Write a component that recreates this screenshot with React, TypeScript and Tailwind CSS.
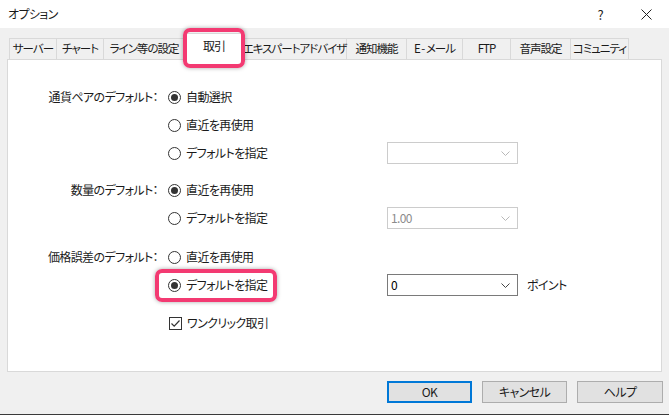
import React from "react";

const tabs = [
  { label: "サーバー", w: "w-[48px]" },
  { label: "チャート", w: "w-[47px]" },
  { label: "ライン等の設定", w: "w-[81px]" },
  { label: "取引", w: "w-[58px]", active: true },
  { label: "エキスパートアドバイザ", w: "w-[104px]" },
  { label: "通知機能", w: "w-[60px]" },
  { label: "E - メール", w: "w-[56px]" },
  { label: "FTP", w: "w-[48px]" },
  { label: "音声設定", w: "w-[60px]" },
  { label: "コミュニティ", w: "w-[58px]" },
];

function Radio({ checked }: { checked?: boolean }) {
  return (
    <span className="w-[13px] h-[13px] rounded-full border border-[#333] bg-white flex items-center justify-center shrink-0">
      {checked && <span className="w-[7px] h-[7px] rounded-full bg-[#333]" />}
    </span>
  );
}

function Checkbox({ checked }: { checked?: boolean }) {
  return (
    <span className="w-[13px] h-[13px] border border-[#333] bg-white shrink-0 flex items-center justify-center">
      {checked && (
        <svg width="11" height="11" viewBox="0 0 11 11">
          <path d="M1.5 5.5 L4.2 8.2 L9.5 2.5" fill="none" stroke="#333" strokeWidth="1.2" />
        </svg>
      )}
    </span>
  );
}

function Select({ value, disabled }: { value?: string; disabled?: boolean }) {
  return (
    <div
      className={`w-[131px] h-[22px] bg-white border flex items-center justify-between pl-[3px] pr-[7px] shrink-0 ${
        disabled ? "border-[#cccccc] text-[#8c8c8c]" : "border-[#7a7a7a] text-black"
      }`}
    >
      <span>{value}</span>
      <svg width="9" height="5" viewBox="0 0 9 5">
        <path d="M0.5 0.5 L4.5 4.5 L8.5 0.5" fill="none" stroke={disabled ? "#b8b8b8" : "#444"} strokeWidth="1" />
      </svg>
    </div>
  );
}

function Row({
  label,
  option,
  checked,
  extra,
}: {
  label?: string;
  option: string;
  checked?: boolean;
  extra?: React.ReactNode;
}) {
  return (
    <div className="h-[28px] flex items-center">
      <div className="w-[153px] pr-[3px] text-right whitespace-nowrap shrink-0">{label}</div>
      <div className="ml-[7px] w-[219px] flex items-center gap-[5px] shrink-0">
        <Radio checked={checked} />
        <span className="whitespace-nowrap">{option}</span>
      </div>
      {extra}
    </div>
  );
}

export default function App() {
  return (
    <div
      className="relative w-[669px] h-[415px] bg-[#f0f0f0] flex flex-col text-[12px] text-[#1a1a1a] leading-none tracking-[-0.6px] border-b border-[#3a3a3a] overflow-hidden [font-feature-settings:'palt'] font-['Noto_Sans_CJK_JP','Noto_Sans',sans-serif]"
    >
      {/* title bar */}
      <div className="h-[28px] bg-white flex items-center pl-[8px] shrink-0">
        <span className="flex-1">オプション</span>
        <span className="text-[13px] text-[#222] mr-[38px]">?</span>
        <svg width="11" height="11" viewBox="0 0 11 11" className="mr-[17px]">
          <path d="M0.5 0.5 L10.5 10.5 M10.5 0.5 L0.5 10.5" stroke="#222" strokeWidth="1" />
        </svg>
      </div>

      {/* tabs */}
      <div className="flex items-end pl-[9px] h-[31px] shrink-0 relative z-10 tracking-[-1px] text-[11.5px]">
        {tabs.map((t) =>
          t.active ? (
            <div
              key={t.label}
              className={`${t.w} h-[27px] -mb-[1px] shrink-0 whitespace-nowrap bg-white border border-b-0 border-[#d9d9d9] flex items-center justify-center pb-[2px] text-[12px]`}
            >
              {t.label}
            </div>
          ) : (
            <div
              key={t.label}
              className={`${t.w} h-[21px] shrink-0 whitespace-nowrap border-t border-r border-[#d9d9d9] first:border-l flex items-center justify-center`}
            >
              {t.label}
            </div>
          )
        )}
      </div>

      {/* panel */}
      <div className="mx-[7px] h-[313px] bg-white border border-[#d9d9d9] pt-[23px] shrink-0">
        <Row label="通貨ペアのデフォルト：" option="自動選択" checked />
        <Row option="直近を再使用" />
        <Row option="デフォルトを指定" extra={<Select disabled />} />

        <div className="mt-[9px]">
          <Row label="数量のデフォルト：" option="直近を再使用" checked />
          <Row option="デフォルトを指定" extra={<Select disabled value="1.00" />} />
        </div>

        <div className="mt-[11px]">
          <Row label="価格誤差のデフォルト：" option="直近を再使用" />
          <Row
            option="デフォルトを指定"
            checked
            extra={
              <div className="flex items-center">
                <Select value="0" />
                <span className="ml-[9px] whitespace-nowrap">ポイント</span>
              </div>
            }
          />
        </div>

        <div className="mt-[10px] h-[28px] flex items-center pl-[161px] gap-[5px]">
          <Checkbox checked />
          <span>ワンクリック取引</span>
        </div>
      </div>

      {/* buttons */}
      <div className="flex justify-end gap-[10px] pr-[6px] mt-[9px]">
        <button className="w-[85px] h-[22px] bg-[#e1e1e1] border-2 border-[#0078d7] text-[#1a1a1a]">OK</button>
        <button className="w-[85px] h-[22px] bg-[#e1e1e1] border border-[#adadad] text-[#1a1a1a]">キャンセル</button>
        <button className="w-[86px] h-[22px] bg-[#e1e1e1] border border-[#adadad] text-[#1a1a1a]">ヘルプ</button>
      </div>

      {/* highlight annotations */}
      <div className="absolute left-[183px] top-[28px] w-[62px] h-[40px] rounded-[7px] border-[4px] border-[#f33a72] shadow-[0_0_4px_rgba(0,0,0,0.35)] z-20" />
      <div className="absolute left-[155px] top-[269px] w-[122px] h-[33px] rounded-[7px] border-[4px] border-[#f33a72] shadow-[0_0_4px_rgba(0,0,0,0.35)] z-20" />
    </div>
  );
}
